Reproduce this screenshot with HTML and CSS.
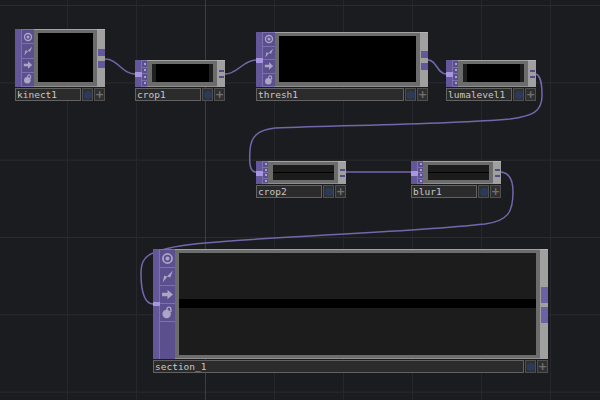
FILE: index.html
```html
<!DOCTYPE html>
<html lang="en">

<head>
    <meta charset="UTF-8">
    <meta name="viewport" content="width=device-width, initial-scale=1.0">
    <title>network editor</title>
    <link rel="stylesheet" href="styles.css">
</head>

<body>
    <svg class="defs" width="0" height="0">
        <symbol id="ic-target" viewBox="0 0 12 12">
            <circle cx="6" cy="6" r="4.2" fill="none" stroke="currentColor" stroke-width="1.6" />
            <circle cx="6" cy="6" r="1.8" fill="currentColor" />
        </symbol>
        <symbol id="ic-bolt" viewBox="0 0 12 12">
            <path d="M11 0.5 L8.5 7 L6 6 L1.5 11.5 L3 5 L5.5 6 Z" fill="currentColor" />
        </symbol>
        <symbol id="ic-arrow" viewBox="0 0 12 12">
            <path d="M1 4.4 H6 V1.6 L11 6 L6 10.4 V7.6 H1 Z" fill="currentColor" />
        </symbol>
        <symbol id="ic-lock" viewBox="0 0 12 12">
            <circle cx="5.2" cy="7.4" r="3.9" fill="currentColor" />
            <path d="M5.5 4 V2.8 A1.8 1.8 0 0 1 9.1 2.8 V5.5" fill="none" stroke="currentColor" stroke-width="1.3" />
        </symbol>
    </svg>

    <div class="canvas">
        <div class="axis"></div>

        <svg class="wires" width="600" height="400" viewBox="0 0 600 400">
            <path d="M105 59 C118 59 122 74 135 74" />
            <path d="M225 74 C238 74 243 60 256 60" />
            <path d="M428 60 C437 60 437 74 446 74" />
            <path d="M536 74 C541 76 542 84 542 96 C542 112 532 116 510 119 C440 125 340 125 275 128 C258 130 251 136 250 150 C249 164 250 172 256 172" />
            <path d="M346 172 H411" />
            <path d="M501 172 C510 173 513 180 513 192 C513 212 508 221 485 224 C400 233 280 236 205 243 C180 245 165 248 153 253 C143 257 141 264 141 274 C141 292 145 304 153 304" />
        </svg>

        <!-- top row -->
        <div class="node big kinect">
            <div class="tile">
                <div class="in-strip"></div>
                <div class="icons">
                    <span class="cell"><svg class="ic"><use href="#ic-target" /></svg></span>
                    <span class="cell"><svg class="ic"><use href="#ic-bolt" /></svg></span>
                    <span class="cell"><svg class="ic"><use href="#ic-arrow" /></svg></span>
                    <span class="cell"><svg class="ic"><use href="#ic-lock" /></svg></span>
                </div>
                <div class="frame"><div class="view"></div></div>
                <div class="out-strip"><span class="out"></span><span class="out"></span></div>
            </div>
            <div class="label-row">
                <div class="label">kinect1</div>
                <span class="btn blue"></span>
                <span class="btn plus">+</span>
            </div>
        </div>

        <div class="node small crop1">
            <div class="tile">
                <div class="in-strip"><span class="in"></span></div>
                <div class="icons">
                    <span class="cell"></span><span class="cell"></span><span class="cell"></span><span class="cell"></span>
                </div>
                <div class="frame"><div class="view"><div class="pic"></div></div></div>
                <div class="out-strip"><span class="out"></span><span class="out"></span></div>
            </div>
            <div class="label-row">
                <div class="label">crop1</div>
                <span class="btn blue"></span>
                <span class="btn plus">+</span>
            </div>
        </div>

        <div class="node big thresh">
            <div class="tile">
                <div class="in-strip"><span class="in"></span></div>
                <div class="icons">
                    <span class="cell"><svg class="ic"><use href="#ic-target" /></svg></span>
                    <span class="cell"><svg class="ic"><use href="#ic-bolt" /></svg></span>
                    <span class="cell"><svg class="ic"><use href="#ic-arrow" /></svg></span>
                    <span class="cell"><svg class="ic"><use href="#ic-lock" /></svg></span>
                </div>
                <div class="frame"><div class="view"></div></div>
                <div class="out-strip"><span class="out"></span><span class="out"></span></div>
            </div>
            <div class="label-row">
                <div class="label">thresh1</div>
                <span class="btn blue"></span>
                <span class="btn plus">+</span>
            </div>
        </div>

        <div class="node small luma">
            <div class="tile">
                <div class="in-strip"><span class="in"></span></div>
                <div class="icons">
                    <span class="cell"></span><span class="cell"></span><span class="cell"></span><span class="cell"></span>
                </div>
                <div class="frame"><div class="view"><div class="pic"></div></div></div>
                <div class="out-strip"><span class="out"></span><span class="out"></span></div>
            </div>
            <div class="label-row">
                <div class="label">lumalevel1</div>
                <span class="btn blue"></span>
                <span class="btn plus">+</span>
            </div>
        </div>

        <!-- second row -->
        <div class="node small flat crop2">
            <div class="tile">
                <div class="in-strip"><span class="in"></span></div>
                <div class="icons">
                    <span class="cell"></span><span class="cell"></span><span class="cell"></span><span class="cell"></span>
                </div>
                <div class="frame"><div class="view band"></div></div>
                <div class="out-strip"><span class="out"></span><span class="out"></span></div>
            </div>
            <div class="label-row">
                <div class="label">crop2</div>
                <span class="btn blue"></span>
                <span class="btn plus">+</span>
            </div>
        </div>

        <div class="node small flat blur">
            <div class="tile">
                <div class="in-strip"><span class="in"></span></div>
                <div class="icons">
                    <span class="cell"></span><span class="cell"></span><span class="cell"></span><span class="cell"></span>
                </div>
                <div class="frame"><div class="view band"></div></div>
                <div class="out-strip"><span class="out"></span><span class="out"></span></div>
            </div>
            <div class="label-row">
                <div class="label">blur1</div>
                <span class="btn blue"></span>
                <span class="btn plus">+</span>
            </div>
        </div>

        <!-- section comp -->
        <div class="node wide section">
            <div class="tile">
                <div class="in-strip"><span class="in"></span></div>
                <div class="icons">
                    <span class="cell"><svg class="ic"><use href="#ic-target" /></svg></span>
                    <span class="cell"><svg class="ic"><use href="#ic-bolt" /></svg></span>
                    <span class="cell"><svg class="ic"><use href="#ic-arrow" /></svg></span>
                    <span class="cell"><svg class="ic"><use href="#ic-lock" /></svg></span>
                </div>
                <div class="frame"><div class="view band"></div></div>
                <div class="out-strip"><span class="out"></span><span class="out"></span></div>
            </div>
            <div class="label-row">
                <div class="label">section_1</div>
                <span class="btn blue"></span>
                <span class="btn plus">+</span>
            </div>
        </div>
    </div>
</body>

</html>
```

FILE: styles.css
```css
html, body {
    margin: 0;
    padding: 0;
    background: #1b1c20;
}
.defs {
    position: absolute;
}
.canvas {
    position: relative;
    width: 600px;
    height: 400px;
    overflow: hidden;
    background-color: #1b1c20;
    background-image:
        linear-gradient(to right, #26272c 1px, transparent 1px),
        linear-gradient(to bottom, #2a2b30 1px, transparent 1px);
    background-size: 69px 77.33px;
    background-position: -2px 5px;
}
.axis {
    position: absolute;
    left: 205px;
    top: 0;
    width: 1px;
    height: 400px;
    background: #3b3763;
}
.wires {
    position: absolute;
    left: 0;
    top: 0;
}
.wires path {
    fill: none;
    stroke: #7466ab;
    stroke-width: 1.5;
}

/* node tile + label */
.node {
    position: absolute;
    display: flex;
    flex-direction: column;
    gap: 1px;
}
.kinect { left: 15px; top: 29px; width: 90px; }
.crop1 { left: 135px; top: 60px; width: 90px; }
.thresh { left: 256px; top: 32px; width: 172px; }
.luma { left: 446px; top: 60px; width: 90px; }
.crop2 { left: 256px; top: 161px; width: 90px; }
.blur { left: 411px; top: 161px; width: 90px; }
.section { left: 153px; top: 249px; width: 395px; }

.kinect .tile { height: 58px; }
.thresh .tile { height: 55px; }
.small .tile { height: 27px; }
.flat .tile { height: 23px; }
.section .tile { height: 110px; }

.tile {
    display: flex;
}
.in-strip {
    width: 7px;
    background: #63579a;
    border-right: 1px solid #7d70ae;
    box-sizing: border-box;
    position: relative;
}
.in {
    position: absolute;
    left: 0;
    top: 50%;
    width: 7px;
    height: 5px;
    margin-top: -2px;
    background: #a896e2;
}
.icons {
    display: flex;
    flex-direction: column;
    width: 12px;
    background: #5b4f8e;
    border-top: 1px solid #7d70ae;
}
.cell {
    display: flex;
    align-items: center;
    justify-content: center;
    flex: 1;
    border-bottom: 1px solid #7d70ae;
}
.big .icons { width: 12px; }
.small .icons { width: 5px; }
.small .cell::before {
    content: "";
    width: 2px;
    height: 2px;
    background: #a8a0c8;
}
.section .icons { width: 15px; }
.section .in { top: 53px; margin-top: 0; height: 4px; }
.section .cell { flex: 0 0 17px; }
.ic {
    width: 10px;
    height: 10px;
    color: #aca6c6;
}
.section .ic {
    width: 13px;
    height: 13px;
}

.frame {
    flex: 1;
    display: flex;
    padding: 3px 4px 3px;
    background: #6c6c6c;
    border-top: 1px solid #a3a3a3;
    border-bottom: 1px solid #8f8f8f;
}
.big .frame, .crop1 .frame, .luma .frame {
    padding-bottom: 4px;
}
.small .frame {
    padding-left: 5px;
}
.view {
    flex: 1;
    background: #000;
}
.small .view {
    display: flex;
    justify-content: center;
    background: #1f1f1f;
}
.pic {
    flex: 1;
    margin: 0 4px;
    background: #000;
}
.view.band {
    background: linear-gradient(to bottom, #1c1c1c 0 45%, #000 45% 54%, #1c1c1c 54%);
}
.out-strip {
    width: 8px;
    display: flex;
    flex-direction: column;
    align-items: center;
    justify-content: center;
    gap: 4px;
    background: #a0a0a0;
    border-top: 1px solid #b4b4b4;
}
.big .out-strip {
    gap: 5px;
}
.out {
    width: 7px;
    height: 7px;
    background: #63579c;
}
.small .out {
    width: 5px;
    height: 2px;
    background: #564b84;
}
.section .out-strip {
    gap: 4px;
}
.section .out {
    width: 7px;
    height: 16px;
    background: #6d61a6;
}

/* label row */
.label-row {
    display: flex;
    gap: 1px;
    height: 13px;
}
.label {
    flex: 1;
    padding-left: 1px;
    box-sizing: border-box;
    border: 1px solid #626262;
    background: #2b2b2b;
    color: #c8c8c8;
    font: 9.5px/11px "DejaVu Sans Mono", monospace;
    overflow: hidden;
}
.btn {
    display: flex;
    align-items: center;
    justify-content: center;
    width: 11px;
    box-sizing: border-box;
    border: 1px solid #505050;
    background: #303030;
    color: #707070;
    font: bold 11px/11px "DejaVu Sans", sans-serif;
}
.btn.blue::before {
    content: "";
    width: 8px;
    height: 8px;
    border-radius: 50%;
    background: #2a3a58;
}
```
